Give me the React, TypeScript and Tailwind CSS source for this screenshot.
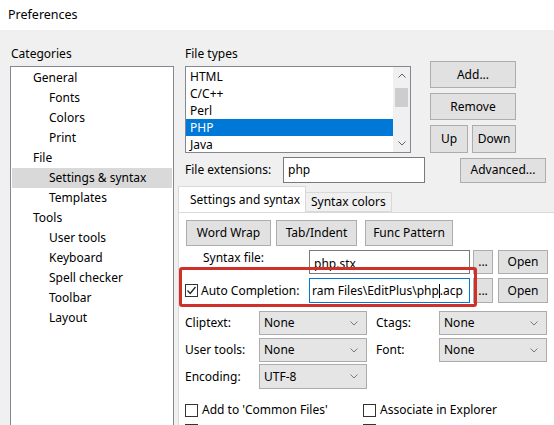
import React from 'react';

const Chevron = ({ up = false, className = '' }: { up?: boolean; className?: string }) => (
  <svg width="8" height="5" viewBox="0 0 8 5" className={className}>
    <polyline
      points={up ? '0.5,4.5 4,1 7.5,4.5' : '0.5,0.5 4,4 7.5,0.5'}
      fill="none"
      stroke="#606060"
      strokeWidth="1"
    />
  </svg>
);

const Btn = ({ children, className = '' }: { children: React.ReactNode; className?: string }) => (
  <div
    className={`flex items-center justify-center shrink-0 border border-[#adadad] bg-[#e1e1e1] ${className}`}
  >
    {children}
  </div>
);

const CheckBox = ({ checked = false }: { checked?: boolean }) => (
  <div className="w-[13px] h-[13px] shrink-0 border border-[#333] bg-white flex items-center justify-center">
    {checked && (
      <svg width="11" height="11" viewBox="0 0 11 11">
        <polyline points="1.5,5.5 4.2,8.5 9.5,2" fill="none" stroke="#222" strokeWidth="1.3" />
      </svg>
    )}
  </div>
);

const Select = ({ value }: { value: string }) => (
  <div className="w-[108px] h-full shrink-0 flex items-center justify-between border border-[#acacac] bg-[#e5e5e5] pl-[4px] pr-[8px]">
    <span>{value}</span>
    <Chevron className="opacity-80" />
  </div>
);

const tree: { label: string; level: number; selected?: boolean }[] = [
  { label: 'General', level: 0 },
  { label: 'Fonts', level: 1 },
  { label: 'Colors', level: 1 },
  { label: 'Print', level: 1 },
  { label: 'File', level: 0 },
  { label: 'Settings & syntax', level: 1, selected: true },
  { label: 'Templates', level: 1 },
  { label: 'Tools', level: 0 },
  { label: 'User tools', level: 1 },
  { label: 'Keyboard', level: 1 },
  { label: 'Spell checker', level: 1 },
  { label: 'Toolbar', level: 1 },
  { label: 'Layout', level: 1 },
];

const fileTypes = ['HTML', 'C/C++', 'Perl', 'PHP', 'Java'];

export default function App() {
  return (
    <div className="w-[554px] h-[425px] overflow-hidden bg-[#f0f0f0] text-[12px] text-black font-['Noto_Sans','Liberation_Sans',sans-serif]">
      {/* title bar */}
      <div className="h-[30px] bg-white flex items-center pl-[8px] text-[12.5px]">Preferences</div>

      <div className="flex pt-[16px]">
        {/* Categories */}
        <div className="ml-[10px] w-[164px] shrink-0">
          <div className="h-[16px] leading-[16px] pl-[1px]">Categories</div>
          <div className="mt-[4px] h-[400px] border border-[#828790] bg-white pt-px">
            {tree.map((t) => (
              <div
                key={t.label}
                className={`h-[20px] leading-[20px] mx-px ${t.level === 0 ? 'pl-[21px]' : 'pl-[37px]'} ${
                  t.selected ? 'bg-[#d9d9d9]' : ''
                }`}
              >
                {t.label}
              </div>
            ))}
          </div>
        </div>

        {/* right side */}
        <div className="ml-[11px] flex-1 min-w-0">
          <div className="flex">
            <div className="w-[226px] shrink-0">
              <div className="h-[16px] leading-[16px]">File types</div>
              <div className="mt-[4px] h-[87px] border border-[#828790] bg-white flex overflow-hidden">
                <div className="flex-1 pt-px">
                  {fileTypes.map((f) => (
                    <div
                      key={f}
                      className={`h-[17px] leading-[17px] pl-[4px] ${f === 'PHP' ? 'bg-[#0078d7] text-white' : ''}`}
                    >
                      {f}
                    </div>
                  ))}
                </div>
                <div className="w-[17px] bg-[#f0f0f0] flex flex-col">
                  <div className="h-[17px] flex items-center justify-center">
                    <Chevron up />
                  </div>
                  <div className="mt-[4px] mx-[2px] h-[19px] bg-[#cdcdcd]" />
                  <div className="flex-1" />
                  <div className="h-[17px] flex items-center justify-center">
                    <Chevron />
                  </div>
                </div>
              </div>
            </div>
            <div className="ml-[19px] mt-[15px] flex flex-col gap-[5px] w-[86px]">
              <Btn className="h-[27px] w-full">Add...</Btn>
              <Btn className="h-[27px] w-full">Remove</Btn>
              <div className="flex gap-[4px]">
                <Btn className="h-[28px] w-[38px]">Up</Btn>
                <Btn className="h-[28px] w-[44px]">Down</Btn>
              </div>
            </div>
          </div>

          {/* file extensions */}
          <div className="mt-[4px] flex items-center h-[26px]">
            <div className="w-[98px] shrink-0">File extensions:</div>
            <div className="w-[142px] h-full shrink-0 border border-[#7a7a7a] bg-white flex items-center pl-[4px]">
              php
            </div>
            <Btn className="ml-[35px] w-[86px] h-[25px]">Advanced...</Btn>
          </div>

          {/* tabs */}
          <div className="mt-[4px] ml-[-7px]">
            <div className="flex items-end h-[25px]">
              <div className="relative z-10 h-[26px] w-[128px] border border-b-0 border-[#d9d9d9] bg-white flex items-center pl-[11px]">
                Settings and syntax
              </div>
              <div className="h-[20px] w-[86px] border border-l-0 border-[#d9d9d9] bg-[#f0f0f0] flex items-center pl-[5px]">
                Syntax colors
              </div>
            </div>
            <div className="relative h-[300px] border-t border-l border-[#d9d9d9] bg-white pl-[7px] pt-[7px]">
              {/* buttons */}
              <div className="flex h-[26px]">
                <Btn className="w-[85px] h-full">Word Wrap</Btn>
                <Btn className="ml-[5px] w-[81px] h-full">Tab/Indent</Btn>
                <Btn className="ml-[8px] w-[88px] h-full">Func Pattern</Btn>
              </div>

              {/* syntax file */}
              <div className="mt-[4px] flex items-center h-[24px]">
                <div className="w-[123px] shrink-0 pl-[17px] pb-[8px]">Syntax file:</div>
                <div className="w-[161px] h-full shrink-0 border border-[#7a7a7a] bg-white flex items-center pl-[4px] pt-[3px]">
                  php.stx
                </div>
                <Btn className="ml-[3px] w-[20px] h-full">...</Btn>
                <Btn className="ml-[5px] w-[50px] h-full">Open</Btn>
              </div>

              {/* auto completion */}
              <div className="mt-[4px] flex items-center h-[25px]">
                <div className="w-[123px] shrink-0 flex items-center ml-[-1px] gap-[3px]">
                  <CheckBox checked />
                  <span>Auto Completion:</span>
                </div>
                <div className="ml-px w-[161px] h-full shrink-0 border border-[#0078d7] bg-white flex items-center pl-[2px] overflow-hidden whitespace-nowrap">
                  <span>{'ram Files\\EditPlus\\php'}</span>
                  <span className="inline-block w-px h-[14px] bg-black" />
                  <span>.acp</span>
                </div>
                <Btn className="ml-[3px] w-[20px] h-full">...</Btn>
                <Btn className="ml-[5px] w-[50px] h-full">Open</Btn>
              </div>

              {/* selects */}
              <div className="mt-[8px] flex items-center h-[24px]">
                <div className="w-[74px] shrink-0 ml-[-1px]">Cliptext:</div>
                <Select value="None" />
                <div className="ml-[9px] w-[63px] shrink-0">Ctags:</div>
                <Select value="None" />
              </div>
              <div className="mt-[3px] flex items-center h-[24px]">
                <div className="w-[74px] shrink-0 ml-[-1px]">User tools:</div>
                <Select value="None" />
                <div className="ml-[9px] w-[63px] shrink-0">Font:</div>
                <Select value="None" />
              </div>
              <div className="mt-[2px] flex items-center h-[25px]">
                <div className="w-[74px] shrink-0 ml-[-1px]">Encoding:</div>
                <Select value="UTF-8" />
              </div>

              {/* checkboxes */}
              <div className="mt-[14px] flex items-center h-[14px] ml-[-1px]">
                <div className="w-[178px] shrink-0 flex items-center gap-[4px]">
                  <CheckBox />
                  <span>Add to 'Common Files'</span>
                </div>
                <div className="flex items-center gap-[4px]">
                  <CheckBox />
                  <span>Associate in Explorer</span>
                </div>
              </div>
              <div className="mt-[6px] flex items-center h-[14px] ml-[-1px]">
                <div className="w-[178px] shrink-0">
                  <CheckBox />
                </div>
                <CheckBox />
              </div>

              {/* highlight annotation */}
              <div className="absolute left-0 top-[54px] w-[298px] h-[40px] border-[3px] border-[#d0302a] rounded-[3px] pointer-events-none" />
            </div>
          </div>
        </div>
      </div>
    </div>
  );
}
